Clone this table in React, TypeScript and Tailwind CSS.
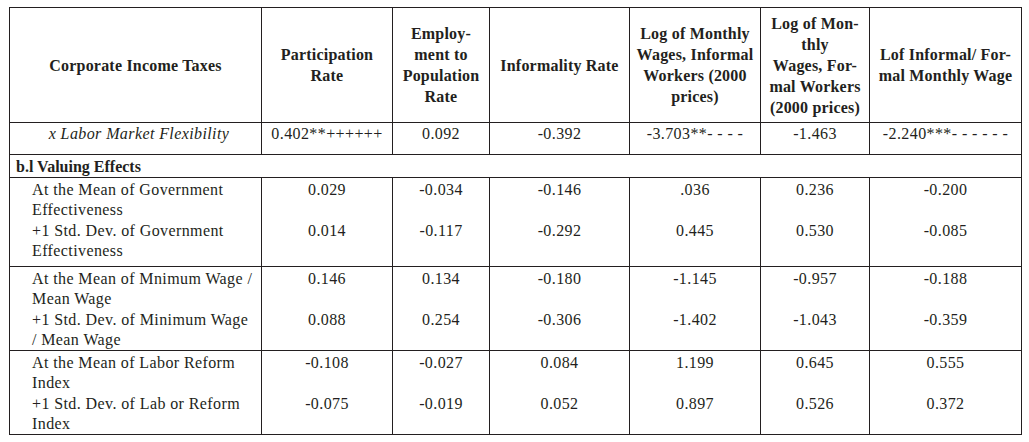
const cols = [252, 131, 97, 140, 131, 109, 152];

const groups = [
  {
    rows: [
      {
        label: ["At the Mean of Government", "Effectiveness"],
        values: ["0.029", "-0.034", "-0.146", ".036", "0.236", "-0.200"],
      },
      {
        label: ["+1 Std. Dev. of Government", "Effectiveness"],
        values: ["0.014", "-0.117", "-0.292", "0.445", "0.530", "-0.085"],
      },
    ],
    extra: true,
  },
  {
    rows: [
      {
        label: ["At the Mean of Mnimum Wage /", "Mean Wage"],
        values: ["0.146", "0.134", "-0.180", "-1.145", "-0.957", "-0.188"],
      },
      {
        label: ["+1 Std. Dev. of Minimum Wage", "/ Mean Wage"],
        values: ["0.088", "0.254", "-0.306", "-1.402", "-1.043", "-0.359"],
      },
    ],
    extra: false,
  },
  {
    rows: [
      {
        label: ["At the Mean of Labor Reform", "Index"],
        values: ["-0.108", "-0.027", "0.084", "1.199", "0.645", "0.555"],
      },
      {
        label: ["+1 Std. Dev. of Lab or Reform", "Index"],
        values: ["-0.075", "-0.019", "0.052", "0.897", "0.526", "0.372"],
      },
    ],
    extra: false,
  },
];

const headers = [
  ["Corporate Income Taxes"],
  ["Participation", "Rate"],
  ["Employ-", "ment to", "Population", "Rate"],
  ["Informality Rate"],
  ["Log of Monthly", "Wages, Informal", "Workers (2000", "prices)"],
  ["Log of Mon-", "thly", "Wages, For-", "mal Workers", "(2000 prices)"],
  ["Lof Informal/ For-", "mal Monthly Wage"],
];

const App = () => {
  return (
    <div className="bg-white w-[1029px] h-[442px] pl-[9px] pt-[7px] text-[#231f20] font-['Liberation_Serif','Times_New_Roman',serif]">
      <table className="border-collapse table-fixed w-[1012px] font-['Liberation_Serif','Times_New_Roman',serif]">
        <colgroup>
          {cols.map((w, i) => (
            <col key={i} style={{ width: w }} />
          ))}
        </colgroup>
        <tbody>
          {/* header */}
          <tr className="h-[115px]">
            {headers.map((lines, i) => (
              <th
                key={i}
                className="border border-[#231f20] text-center align-middle font-bold text-[16px] leading-[21px] tracking-[0.2px] px-1"
              >
                {lines.map((l, j) => (
                  <div key={j}>{l}</div>
                ))}
              </th>
            ))}
          </tr>

          {/* interaction row */}
          <tr className="h-[32px] text-[16px] leading-[20px] tracking-[0.4px]">
            <td className="border border-[#231f20] align-top pt-px text-center pl-[7px] italic">
              x Labor Market Flexibility
            </td>
            <td className="border border-[#231f20] align-top pt-px text-center">0.402**++++++</td>
            <td className="border border-[#231f20] align-top pt-px text-center">0.092</td>
            <td className="border border-[#231f20] align-top pt-px text-center">-0.392</td>
            <td className="border border-[#231f20] align-top pt-px text-center">-3.703**- - - -</td>
            <td className="border border-[#231f20] align-top pt-px text-center">-1.463</td>
            <td className="border border-[#231f20] align-top pt-px text-center">-2.240***- - - - - -</td>
          </tr>

          {/* section */}
          <tr className="h-[23px]">
            <td
              colSpan={7}
              className="border border-[#231f20] pl-[6px] pt-[2px] font-bold text-[16px] leading-[20px]"
            >
              b.l Valuing Effects
            </td>
          </tr>

          {groups.map((g, gi) =>
            g.rows.map((r, ri) => {
              const first = ri === 0;
              const pad = first ? "pt-[2px] pb-[1px]" : g.extra ? "pb-[5px]" : "";
              const edge = first ? "border-t border-t-[#231f20]" : "border-b border-b-[#231f20]";
              return (
                <tr key={`${gi}-${ri}`} className="text-[16px] leading-[20px] tracking-[0.4px]">
                  <td className={`border-x border-x-[#231f20] ${edge} align-top pl-[22px] ${pad}`}>
                    <div>{r.label[0]}</div>
                    <div>{r.label[1]}</div>
                  </td>
                  {r.values.map((v, vi) => (
                    <td
                      key={vi}
                      className={`border-x border-x-[#231f20] ${edge} align-top text-center ${pad}`}
                    >
                      {v}
                    </td>
                  ))}
                </tr>
              );
            })
          )}
        </tbody>
      </table>
    </div>
  );
};

export default App;
